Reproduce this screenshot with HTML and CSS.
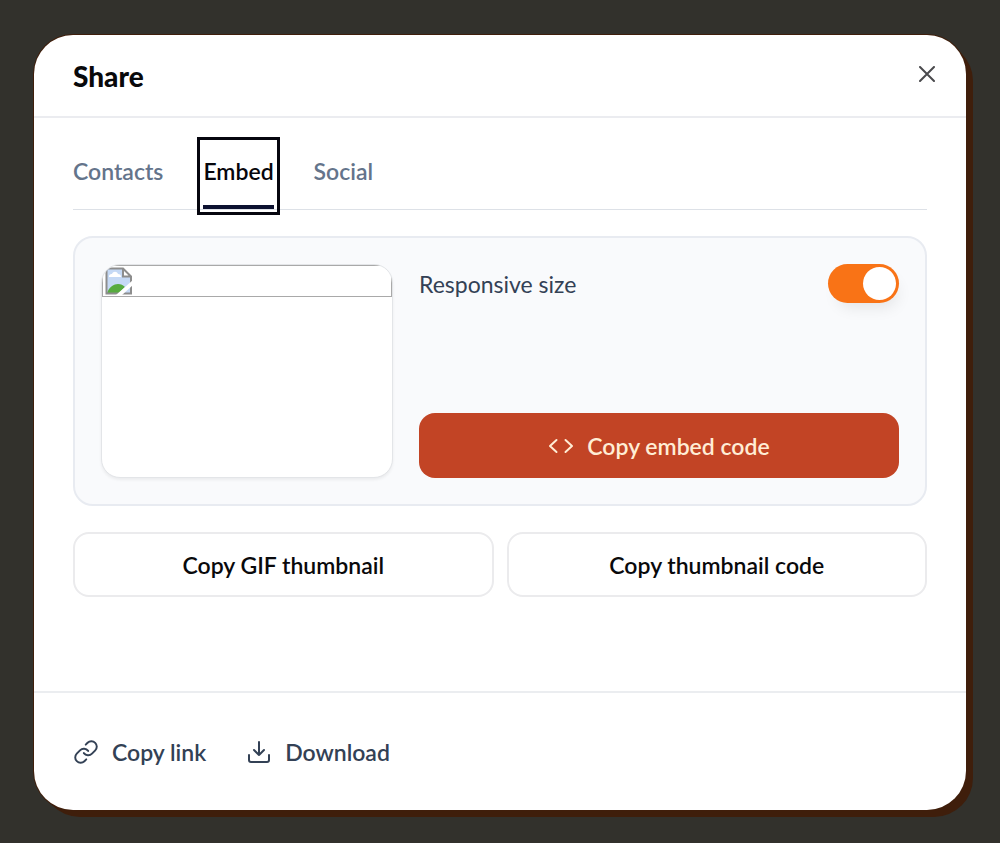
FILE: index.html
```html
<!DOCTYPE html>
<html lang="en">
<head>
<meta charset="utf-8">
<meta name="viewport" content="width=device-width, initial-scale=1">
<title>Share</title>
<link rel="stylesheet" href="styles.css">
</head>
<body class="page">
<main class="dialog" role="dialog" aria-labelledby="dialog-title">
  <header class="dialog-header">
    <h1 class="title" id="dialog-title">Share</h1>
    <button class="close" type="button" aria-label="Close">
      <svg width="16" height="16" viewBox="0 0 16 16" fill="none" stroke="currentColor" stroke-width="2" stroke-linecap="round"><path d="M1 1l14 14M15 1L1 15"/></svg>
    </button>
  </header>
  <div class="dialog-body">
    <div class="tabs" role="tablist">
      <button class="tab" type="button" role="tab" aria-selected="false">Contacts</button>
      <button class="tab tab-active" type="button" role="tab" aria-selected="true">Embed</button>
      <button class="tab" type="button" role="tab" aria-selected="false">Social</button>
    </div>
    <section class="embed-card">
      <div class="thumbnail">
        <div class="missing-image">
          <svg width="28" height="28" viewBox="0 0 28 28">
            <path d="M1.500 1.500H18L26 9.500V26.500H1.500Z" fill="#c5d9f5"/>
            <path d="M4 10c0-3 2-3 3-3 1-3 5-3 6 0 2 0 3 1 3 3z" fill="#fff"/>
            <path d="M2 26c2-6 7-9 11-9 3 0 5 1 7 3l-6 6z" fill="#57ab3f"/>
            <path d="M18 1.500V9.500H26Z" fill="#fff"/>
            <path d="M1.500 26.500V1.500H18L26 9.500V26.500ZM18 1.500V9.500H26" fill="none" stroke="#8d8d8d" stroke-width="2"/>
            <path d="M11 28L28 13V18L17 28Z" fill="#fff"/>
          </svg>
        </div>
      </div>
      <div class="embed-options">
        <div class="option">
          <label class="option-label" for="responsive">Responsive size</label>
          <input class="switch" id="responsive" type="checkbox" role="switch" checked>
        </div>
        <button class="button button-primary" type="button">
          <svg width="26" height="16" viewBox="0 0 26 16" fill="none" stroke="currentColor" stroke-width="2" stroke-linecap="round" stroke-linejoin="round"><path d="M8.500 2L2 8l6.500 6M17.500 2L24 8l-6.500 6"/></svg>
          Copy embed code
        </button>
      </div>
    </section>
    <div class="actions">
      <button class="button button-outline" type="button">Copy GIF thumbnail</button>
      <button class="button button-outline" type="button">Copy thumbnail code</button>
    </div>
  </div>
  <footer class="dialog-footer">
    <button class="footer-action" type="button">
      <svg width="26" height="26" viewBox="0 0 24 24" fill="none" stroke="currentColor" stroke-width="1.800" stroke-linecap="round" stroke-linejoin="round"><path d="M10 13a5 5 0 0 0 7.540.540l3-3a5 5 0 0 0-7.070-7.070l-1.720 1.710M14 11a5 5 0 0 0-7.540-.540l-3 3a5 5 0 0 0 7.070 7.070l1.710-1.710"/></svg>
      Copy link
    </button>
    <button class="footer-action" type="button">
      <svg width="26" height="26" viewBox="0 0 26 26" fill="none" stroke="currentColor" stroke-width="2" stroke-linecap="round" stroke-linejoin="round"><path d="M3 16v5a2 2 0 0 0 2 2h16a2 2 0 0 0 2-2v-5M13 3v13M8 11l5 5 5-5"/></svg>
      Download
    </button>
  </footer>
</main>
</body>
</html>
```
FILE: styles.css
```css
* {
  box-sizing: border-box;
}

.page {
  margin: 0;
  min-height: 100vh;
  display: flex;
  padding: 35px 34px 33px;
  background: #32312c;
  color: #09090b;
  font-family: "Lato", "Open Sans", sans-serif;
  font-size: 23px;
  line-height: 32px;
}

button {
  margin: 0;
  padding: 0;
  border: 0;
  background: none;
  color: inherit;
  font: inherit;
  cursor: pointer;
}

svg {
  display: block;
  flex: none;
}

.dialog {
  flex: 1;
  min-width: 0;
  display: flex;
  flex-direction: column;
  border-radius: 39px;
  background: #fff;
  box-shadow: 0 0 0 1px #3f1e0b, 7px 7px 0 #3f1e0b;
}

.dialog-header {
  display: flex;
  align-items: center;
  justify-content: space-between;
  padding: 25px 31px 24px 39px;
  border-bottom: 2px solid #ebecf0;
}

.title {
  margin: 0;
  font-size: 28px;
  line-height: 32px;
  font-weight: 900;
}

.close {
  display: flex;
  margin-top: -5px;
  color: #4a4a4d;
}

.dialog-body {
  flex: 1;
  padding: 25px 39px 39px;
}

.tabs {
  display: flex;
  gap: 40px;
  margin-bottom: 26px;
  border-bottom: 1px solid #dde1e7;
}

.tab {
  height: 66px;
  padding: 0 0 6px;
  border-bottom: 4px solid transparent;
  color: #64748b;
  font-weight: 600;
}

.tab-active {
  border-color: #0c1130;
  color: #06060c;
  outline: 3px solid #06060f;
  outline-offset: 3px;
}

.embed-card {
  display: grid;
  grid-template-columns: 292fr 480fr;
  gap: 26px;
  padding: 26px;
  border: 2px solid #e8ebf1;
  border-radius: 20px;
  background: #f9fafc;
}

.thumbnail {
  height: 214px;
  overflow: hidden;
  border: 1px solid #e3e5e8;
  border-radius: 19px;
  background: #fff;
  box-shadow: 0 2px 3px #0000000f;
}

.missing-image {
  padding: 1px 2px;
  border: 1px solid #a9a9a9;
}

.embed-options {
  display: flex;
  flex-direction: column;
  justify-content: space-between;
}

.option {
  display: flex;
  align-items: center;
  justify-content: space-between;
}

.option-label {
  color: #334155;
}

.switch {
  appearance: none;
  display: flex;
  justify-content: flex-end;
  width: 71px;
  height: 39px;
  margin: 0;
  padding: 3px;
  border-radius: 20px;
  background: #f97316;
  box-shadow: 4px 10px 16px -6px #00000018;
}

.switch::before {
  content: "";
  width: 33px;
  height: 33px;
  border-radius: 50%;
  background: #fff;
}

.switch:not(:checked) {
  justify-content: flex-start;
  background: #cbd5e1;
}

.button {
  display: flex;
  align-items: center;
  justify-content: center;
  gap: 13px;
  height: 65px;
  border-radius: 16px;
  font-weight: 600;
}

.button-primary {
  background: #c24425;
  color: #ffedd5;
}

.button-outline {
  border: 2px solid #ebebed;
}

.actions {
  display: grid;
  grid-template-columns: 1fr 1fr;
  gap: 13px;
  margin-top: 26px;
}

.dialog-footer {
  display: flex;
  gap: 40px;
  padding: 43px 39px 42px;
  border-top: 2px solid #ebedf0;
}

.footer-action {
  display: flex;
  align-items: center;
  gap: 13px;
  color: #334155;
  font-weight: 600;
}
```
